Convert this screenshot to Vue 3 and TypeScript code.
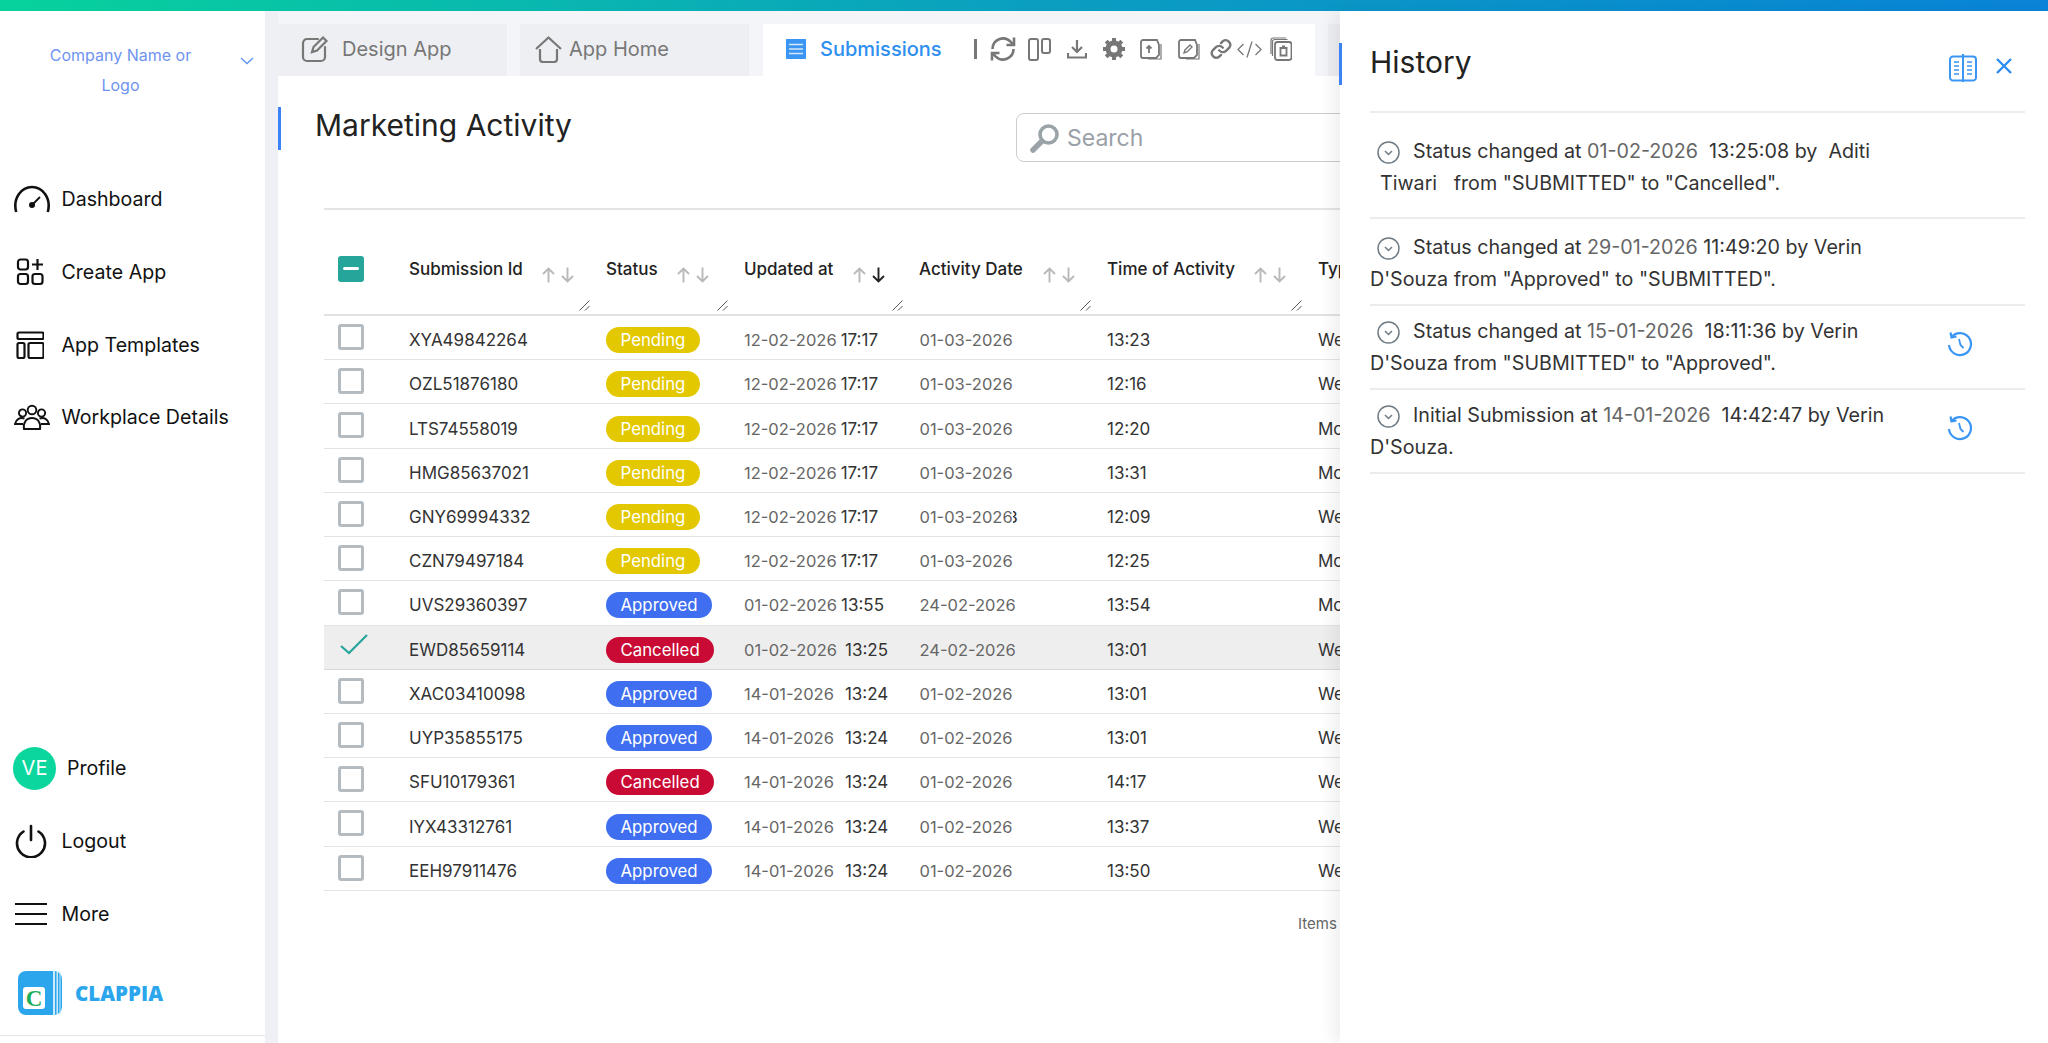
<script setup lang="ts">
interface Row { id: string; status: 'Pending' | 'Approved' | 'Cancelled'; updated: string; time: string; wide: boolean; date: string; at: string; type: string; selected?: boolean; stray?: boolean }
const P = 'Pending' as const, A = 'Approved' as const, C = 'Cancelled' as const
const rows: Row[] = [
  { id: 'XYA49842264', status: P, updated: '12-02-2026', time: '17:17', wide: false, date: '01-03-2026', at: '13:23', type: 'Webinar' },
  { id: 'OZL51876180', status: P, updated: '12-02-2026', time: '17:17', wide: false, date: '01-03-2026', at: '12:16', type: 'Webinar' },
  { id: 'LTS74558019', status: P, updated: '12-02-2026', time: '17:17', wide: false, date: '01-03-2026', at: '12:20', type: 'Monthly' },
  { id: 'HMG85637021', status: P, updated: '12-02-2026', time: '17:17', wide: false, date: '01-03-2026', at: '13:31', type: 'Monthly' },
  { id: 'GNY69994332', status: P, updated: '12-02-2026', time: '17:17', wide: false, date: '01-03-2026', at: '12:09', type: 'Webinar', stray: true },
  { id: 'CZN79497184', status: P, updated: '12-02-2026', time: '17:17', wide: false, date: '01-03-2026', at: '12:25', type: 'Monthly' },
  { id: 'UVS29360397', status: A, updated: '01-02-2026', time: '13:55', wide: false, date: '24-02-2026', at: '13:54', type: 'Monthly' },
  { id: 'EWD85659114', status: C, updated: '01-02-2026', time: '13:25', wide: true, date: '24-02-2026', at: '13:01', type: 'Webinar', selected: true },
  { id: 'XAC03410098', status: A, updated: '14-01-2026', time: '13:24', wide: true, date: '01-02-2026', at: '13:01', type: 'Webinar' },
  { id: 'UYP35855175', status: A, updated: '14-01-2026', time: '13:24', wide: true, date: '01-02-2026', at: '13:01', type: 'Webinar' },
  { id: 'SFU10179361', status: C, updated: '14-01-2026', time: '13:24', wide: true, date: '01-02-2026', at: '14:17', type: 'Webinar' },
  { id: 'IYX43312761', status: A, updated: '14-01-2026', time: '13:24', wide: true, date: '01-02-2026', at: '13:37', type: 'Webinar' },
  { id: 'EEH97911476', status: A, updated: '14-01-2026', time: '13:24', wide: true, date: '01-02-2026', at: '13:50', type: 'Webinar' },
]
const headers = [
  { label: 'Submission Id', gap: 19, active: false },
  { label: 'Status', gap: 19, active: false },
  { label: 'Updated at', gap: 20, active: true },
  { label: 'Activity Date', gap: 20, active: false },
  { label: 'Time of Activity', gap: 19, active: false },
]
</script>

<template>
  <div class="app">
    <div class="topbar"></div>
    <div class="shell">
      <aside class="sidebar">
        <div class="company">
          <div class="company-name">Company Name or<br />Logo</div>
          <svg class="chev" width="14" height="8" viewBox="0 0 14 8" fill="none" stroke="#5b93ec" stroke-width="1.3"><path d="M1 1l6 5.5L13 1" /></svg>
        </div>
        <nav class="nav">
          <a class="nav-item">
            <svg class="gauge" width="38" height="28" viewBox="0 0 38 28" fill="none" stroke="#111" stroke-width="2.6"><path d="M3.2 27C-.5 13 8.5 2 19 2s19.500 11 15.800 25" /><circle cx="19" cy="20" r="3" fill="#111" stroke="none" /><path d="M19 20l8-8" stroke-width="1.800" /></svg>
            <span>Dashboard</span>
          </a>
          <a class="nav-item">
            <svg width="28" height="28" viewBox="0 0 28 28" fill="none" stroke="#111" stroke-width="2.2"><rect x="2" y="1.500" width="10" height="10" rx="2.500" /><rect x="2" y="16" width="10" height="10" rx="2.500" /><rect x="16.500" y="16" width="10" height="10" rx="2.500" /><path d="M21.500 1v11M16 6.500h11" /></svg>
            <span>Create App</span>
          </a>
          <a class="nav-item">
            <svg width="28" height="28" viewBox="0 0 28 28" fill="none" stroke="#111" stroke-width="2.2"><rect x="1.500" y="1.500" width="26" height="6.500" rx="1.500" /><rect x="1.500" y="12" width="7" height="15" rx="1.500" /><rect x="12.500" y="12" width="15" height="15" rx="1.500" /></svg>
            <span>App Templates</span>
          </a>
          <a class="nav-item">
            <svg class="shift" width="36" height="26" viewBox="0 0 36 26" fill="none" stroke="#111" stroke-width="1.900"><circle cx="18" cy="6" r="4.300" /><circle cx="8.500" cy="9" r="3.600" /><circle cx="27.500" cy="9" r="3.600" /><path d="M10 25c-1-6 2-11 8-11s9 5 8 11z" /><path d="M10.500 14.500C6 13 2 15 1 20h8M25.500 14.500c4.500-1.500 8.500.5 9.500 5.500h-8" /></svg>
            <span>Workplace Details</span>
          </a>
        </nav>
        <div class="nav bottom">
          <a class="nav-item profile">
            <span class="avatar">VE</span>
            <span>Profile</span>
          </a>
          <a class="nav-item">
            <svg class="shift" width="34" height="34" viewBox="0 0 34 34" fill="none" stroke="#111" stroke-width="2.600" stroke-linecap="round"><path d="M17 2v14" /><path d="M9.500 7.500a14 14 0 1 0 15 0" /></svg>
            <span>Logout</span>
          </a>
          <a class="nav-item">
            <svg class="shift" width="34" height="24" viewBox="0 0 34 24" stroke="#111" stroke-width="2.200"><path d="M1 2h32M1 12h32M1 22h32" /></svg>
            <span>More</span>
          </a>
        </div>
        <div class="brand">
          <svg width="44" height="44" viewBox="0 0 44 44"><rect width="44" height="44" rx="8" fill="#2ba6ec" /><path d="M35 0h2v44h-2zM38.500 0h1.500v44h-1.500zM41.500 0h1v44h-1z" fill="#cdeafb" /><rect x="5" y="16" width="22" height="22" rx="3" fill="#fff" /><text x="16" y="34.500" text-anchor="middle" font-family="Liberation Serif, serif" font-weight="700" font-size="23" fill="#1fae5b">C</text></svg>
          <span class="brand-name">CLAPPIA</span>
        </div>
      </aside>
      <main class="main">
        <div class="tabs">
          <div class="tab">
            <svg width="28" height="28" viewBox="0 0 28 28" fill="none" stroke="#777" stroke-width="2.200" stroke-linecap="round"><path d="M17 4H6a4 4 0 0 0-4 4v14a4 4 0 0 0 4 4h14a4 4 0 0 0 4-4V12" /><path d="M11 17l1.500-5L22 2.500l3.500 3.500L16 15.500z" /></svg>
            <span>Design App</span>
          </div>
          <div class="tab home">
            <svg width="27" height="27" viewBox="0 0 27 27" fill="none" stroke="#777" stroke-width="2.200" stroke-linejoin="round"><path d="M1 13L13.500 1.500 26 13" /><path d="M5 13v10a3 3 0 0 0 3 3h11a3 3 0 0 0 3-3V13" /></svg>
            <span>App Home</span>
          </div>
          <div class="tab active">
            <svg width="20" height="20" viewBox="0 0 20 20"><rect width="20" height="20" fill="#3b95f3" /><path d="M3 5.500h14M3 10h14M3 14.500h14" stroke="#d4e8fc" stroke-width="1.500" /></svg>
            <span class="tab-label">Submissions</span>
            <span class="sep"></span>
            <svg class="t1" width="26" height="26" viewBox="0 0 26 26" fill="none" stroke="#777" stroke-width="2.600"><path d="M2.500 13a10.500 10.500 0 0 1 18-7.300L23.500 9M23.500 13a10.500 10.500 0 0 1-18 7.300L2.500 17" /><path d="M24 1.500V9h-7.500M2 24.500V17h7.500" /></svg>
            <svg class="t2" width="23" height="23" viewBox="0 0 23 23" fill="none" stroke="#777" stroke-width="2"><rect x="1" y="1" width="9" height="21" rx="2" /><rect x="14" y="1" width="8" height="14" rx="2" /></svg>
            <svg class="t3" width="20" height="20" viewBox="0 0 20 20" fill="none" stroke="#777" stroke-width="2.200"><path d="M10 1v12M5 8l5 5 5-5" /><path d="M1 14v4.500h18V14" /></svg>
            <svg class="t4" width="24" height="26" viewBox="0 0 24 24" fill="none" stroke="#777" stroke-width="5"><circle cx="12" cy="12" r="6" /><path stroke-width="4" d="M12 1v4M12 19v4M1 12h4M19 12h4M4.200 4.200l2.800 2.800M17 17l2.800 2.800M4.200 19.800L7 17M17 7l2.800-2.800" /></svg>
            <svg class="t5" width="22" height="21" viewBox="0 0 22 21" fill="none" stroke="#777" stroke-width="1.800"><path d="M17 1H3a2 2 0 0 0-2 2v14a2 2 0 0 0 2 2h13l3-3V6z" /><path d="M21 5v15H8" stroke-width="1.200" /><path d="M9 14V7M6.500 9.500L9 7l2.500 2.500" /></svg>
            <svg class="t6" width="22" height="21" viewBox="0 0 22 21" fill="none" stroke="#777" stroke-width="1.800"><path d="M17 1H3a2 2 0 0 0-2 2v14a2 2 0 0 0 2 2h13l3-3V6z" /><path d="M21 5v15H8" stroke-width="1.200" /><path d="M6 14l1-3 5-5 2 2-5 5z" stroke-width="1.400" /></svg>
            <svg class="t7" width="22" height="22" viewBox="0 0 24 24" fill="none" stroke="#777" stroke-width="2.600" stroke-linecap="round"><path d="M10 13.500a5 5 0 0 0 7.500.5l3.500-3.500a5 5 0 0 0-7-7l-2 2" /><path d="M14 10.500a5 5 0 0 0-7.500-.5L3 13.500a5 5 0 0 0 7 7l2-2" /></svg>
            <svg class="t8" width="25" height="17" viewBox="0 0 25 17" fill="none" stroke="#777" stroke-width="1.300"><path d="M6.500 3L1 8.500 6.500 14M18.500 3L24 8.500 18.500 14M15 .5L10 16.500" /></svg>
            <svg class="t9" width="22" height="24" viewBox="0 0 22 24" fill="none" stroke="#777"><path d="M1 17V3a2 2 0 0 1 2-2h13" stroke-width="1.200" /><path d="M2.500 19V4.500a2 2 0 0 1 2-2h13" stroke-width="1.200" /><rect x="5" y="5" width="16.500" height="18" rx="2.500" stroke-width="1.800" /><path d="M9.500 11h8M10.500 11.500v7h6v-7M12 9.500h3" stroke-width="1.800" /></svg>
          </div>
          <div class="tab-rest"></div>
        </div>
        <div class="page">
          <div class="page-head">
            <h1 class="title">Marketing Activity</h1>
            <div class="search">
              <svg width="30" height="30" viewBox="0 0 30 30" fill="none" stroke="#9aa3a8"><circle cx="18.500" cy="11.500" r="8.500" stroke-width="3.600" /><path d="M11.500 18.500L3 27" stroke-width="5.500" stroke-linecap="round" /></svg>
              <span>Search</span>
            </div>
          </div>
          <div class="rule"></div>
          <div class="table">
            <div class="thead grid">
              <div class="cell-check"><span class="minus"></span></div>
              <div v-for="h in headers" :key="h.label" class="th">
                <span class="th-label">{{ h.label }}</span>
                <span class="arrows" :style="{ marginLeft: h.gap + 'px' }">
                  <svg width="13" height="16" viewBox="0 0 13 16" fill="none" stroke="#b9b9b9" stroke-width="1.900"><path d="M6.500 15.500V1.500M1 7l5.500-5.500L12 7" /></svg>
                  <svg width="13" height="16" viewBox="0 0 13 16" fill="none" :stroke="h.active ? '#222' : '#b9b9b9'" stroke-width="1.900"><path d="M6.500.5v14M1 9l5.500 5.500L12 9" /></svg>
                </span>
                <svg class="grip" width="11" height="11" viewBox="0 0 11 11" stroke="#555" stroke-width="1"><path d="M.5 10.500L10.500.5M6 10.500L10.500 6" /></svg>
              </div>
              <div class="th"><span class="th-label">Type</span></div>
            </div>
            <div v-for="r in rows" :key="r.id" class="grid tr" :class="{ selected: r.selected }">
              <div class="cell-check">
                <svg v-if="r.selected" class="tick" width="28" height="21" viewBox="0 0 28 21" fill="none" stroke="#26a69a" stroke-width="2.200"><path d="M1 12l8 7L27 1" /></svg>
                <span v-else class="box"></span>
              </div>
              <div class="td id">{{ r.id }}</div>
              <div class="td"><span class="badge" :class="r.status.toLowerCase()">{{ r.status }}</span></div>
              <div class="td"><span class="muted">{{ r.updated }}</span><span class="time" :class="{ wide: r.wide, wider: r.updated.startsWith('14') }">{{ r.time }}</span></div>
              <div class="td date"><span class="muted">{{ r.date }}</span><span v-if="r.stray" class="stray">3</span></div>
              <div class="td id">{{ r.at }}</div>
              <div class="td id">{{ r.type }}</div>
            </div>
          </div>
          <div class="items">Items per page</div>
        </div>
      </main>
    </div>
    <section class="panel">
      <span class="panel-bar"></span>
      <header class="panel-head">
        <h2>History</h2>
        <svg class="book" width="28" height="28" viewBox="0 0 28 28" fill="none" stroke="#3b95f3" stroke-width="2"><path d="M13 2.500H4a3 3 0 0 0-3 3v18a3 3 0 0 0 3 3h9M15 2.500h9a3 3 0 0 1 3 3v18a3 3 0 0 1-3 3h-9M14 0v28" /><path d="M5 8h5M5 12h5M5 16h5M5 20h5M18 8h5M18 12h5M18 16h5M18 20h5" stroke-width="1.400" /></svg>
        <svg class="close" width="16" height="16" viewBox="0 0 16 16" stroke="#2f8ff0" stroke-width="2.400"><path d="M1 1l14 14M15 1L1 15" /></svg>
      </header>
      <article class="entry e1">
        <p>
          <svg class="down" width="23" height="23" viewBox="0 0 23 23" fill="none" stroke="#6f7c85" stroke-width="1.500"><circle cx="11.500" cy="11.500" r="10.500" /><path d="M8 10l3.500 3.500L15 10" /></svg>
          <span class="lead">Status changed at</span> <span class="muted">01-02-2026</span>&nbsp; 13:25:08 by&nbsp; Aditi<br /><span class="indent">Tiwari</span>&nbsp;&nbsp; from "SUBMITTED" to "Cancelled".
        </p>
      </article>
      <article class="entry e2">
        <p>
          <svg class="down" width="23" height="23" viewBox="0 0 23 23" fill="none" stroke="#6f7c85" stroke-width="1.500"><circle cx="11.500" cy="11.500" r="10.500" /><path d="M8 10l3.500 3.500L15 10" /></svg>
          <span class="lead">Status changed at</span> <span class="muted">29-01-2026</span> 11:49:20 by Verin D'Souza from "Approved" to "SUBMITTED".
        </p>
      </article>
      <article class="entry">
        <p>
          <svg class="down" width="23" height="23" viewBox="0 0 23 23" fill="none" stroke="#6f7c85" stroke-width="1.500"><circle cx="11.500" cy="11.500" r="10.500" /><path d="M8 10l3.500 3.500L15 10" /></svg>
          <span class="lead">Status changed at</span> <span class="muted">15-01-2026</span>&nbsp; 18:11:36 by Verin D'Souza from "SUBMITTED" to "Approved".
        </p>
        <svg class="restore" width="25" height="26" viewBox="0 0 25 26" fill="none" stroke="#3b95f3" stroke-width="2.200"><path d="M4.500 6A11 11 0 1 1 2 14" /><path d="M3.500 1.500L4.500 6.500 9.500 5.500" /><path d="M12 8l1.500 6 3 3" stroke-width="1.800" /></svg>
      </article>
      <article class="entry e4">
        <p>
          <svg class="down" width="23" height="23" viewBox="0 0 23 23" fill="none" stroke="#6f7c85" stroke-width="1.500"><circle cx="11.500" cy="11.500" r="10.500" /><path d="M8 10l3.500 3.500L15 10" /></svg>
          <span class="lead">Initial Submission at</span> <span class="muted">14-01-2026</span>&nbsp; 14:42:47 by Verin D'Souza.
        </p>
        <svg class="restore" width="25" height="26" viewBox="0 0 25 26" fill="none" stroke="#3b95f3" stroke-width="2.200"><path d="M4.500 6A11 11 0 1 1 2 14" /><path d="M3.500 1.500L4.500 6.500 9.500 5.500" /><path d="M12 8l1.500 6 3 3" stroke-width="1.800" /></svg>
      </article>
    </section>
  </div>
</template>

<style>
html, body { margin: 0; height: 100%; overflow: hidden; background: #fff; }
</style>

<style scoped>
.app { position: relative; width: 2048px; height: 1043px; overflow: hidden; font-family: Inter, "Liberation Sans", sans-serif; color: #222; display: flex; flex-direction: column; }
.topbar { height: 11px; flex: none; background: linear-gradient(90deg, #07d29c 0%, #0a9fc0 50%, #0a84d8 100%); }
.shell { flex: 1; display: flex; min-height: 0; background: #eff0f5; }
.sidebar { width: 265px; flex: none; background: #fff; display: flex; flex-direction: column; box-sizing: border-box; padding-bottom: 7px; }
.company { position: relative; padding-top: 29px; height: 152px; box-sizing: border-box; flex: none; }
.company-name { width: 241px; text-align: center; font-size: 16px; line-height: 30px; color: #6f93f0; }
.chev { position: absolute; left: 240px; top: 46px; }
.nav { display: flex; flex-direction: column; }
.nav-item { display: flex; align-items: center; height: 72.7px; color: #111; font-size: 19.600px; position: relative; padding-left: 61.500px; box-sizing: border-box; }
.nav-item > svg { position: absolute; left: 16px; top: 50%; transform: translateY(-50%); }
.nav-item > svg.gauge { left: 12.500px; }
.nav-item > svg.shift { left: 14px; }
.bottom { margin-top: auto; }
.profile { padding-left: 67px; }
.avatar { position: absolute; left: 13px; top: 15px; width: 43px; height: 43px; border-radius: 50%; background: #0bd69d; color: #fff; font-size: 20px; display: flex; align-items: center; justify-content: center; }
.brand { display: flex; align-items: center; gap: 13px; padding-left: 18px; height: 86px; flex: none; box-sizing: border-box; border-bottom: 1.500px solid #e6e6e6; }
.brand-name { color: #2ba6ec; font-size: 20.500px; font-weight: 800; font-family: "Open Sans", Inter, sans-serif; }
.main { margin-left: 13px; flex: 1; min-width: 0; display: flex; flex-direction: column; overflow: hidden; background: #fff; }
.tabs { display: flex; height: 65px; box-sizing: border-box; padding-top: 13px; background: #f4f5f9; flex: none; }
.tab { display: flex; align-items: center; width: 229px; background: #eeeff3; color: #777; font-size: 20px; line-height: 24px; padding: 0 0 2px 23px; box-sizing: border-box; gap: 13px; }
.tab.home { width: 229px; margin-left: 13px; padding-left: 15px; gap: 7px; }
.tab.active { width: 552px; margin-left: 14px; background: #fff; padding-left: 23px; gap: 0; color: #2f8ff0; }
.tab-label { margin-left: 14px; font-weight: 500; }
.tab-rest { margin-left: 13px; width: 12px; background: #eeeff3; }
.sep { width: 3px; height: 20px; background: #777; margin-left: 32px; }
.t1 { margin-left: 13px; }
.t2 { margin-left: 12px; }
.t3 { margin-left: 16px; }
.t4 { margin-left: 15px; }
.t5 { margin-left: 14px; }
.t6 { margin-left: 16px; }
.t7 { margin-left: 10px; }
.t8 { margin-left: 5px; }
.t9 { margin-left: 8px; }
.page { flex: 1; position: relative; }
.page-head { display: flex; margin-top: 31px; height: 43px; border-left: 3px solid #3b82f6; padding-left: 34px; }
.title { margin: 0; font-size: 30px; font-weight: 400; line-height: 37px; color: #222; width: 701px; flex: none; }
.search { flex: none; width: 420px; height: 49px; margin-top: 6px; box-sizing: border-box; border: 1.5px solid #ccc; border-radius: 8px; display: flex; align-items: center; padding-left: 13px; gap: 7px; color: #9aa0a6; font-size: 23px; }
.rule { height: 1.500px; margin: 58px 0 0 46px; background: #e4e4e4; }
.table { margin: 21px 0 0 46px; width: 1200px; }
.grid { display: grid; grid-template-columns: 85px 197px 138px 175px 188px 211px 206px; }
.thead { height: 85.5px; box-sizing: border-box; border-bottom: 2px solid #e2e2e2; }
.cell-check { padding-left: 14px; }
.thead .cell-check { padding-top: 25px; }
.minus { display: block; width: 26px; height: 26px; border-radius: 3px; background: #26a69a; position: relative; }
.minus::after { content: ""; position: absolute; left: 5px; right: 5px; top: 11px; height: 3.500px; background: #fff; border-radius: 2px; }
.th { position: relative; display: flex; align-items: flex-start; padding-top: 28px; font-size: 17px; font-weight: 500; color: #222; }
.th-label { line-height: 20px; white-space: nowrap; }
.arrows { display: flex; gap: 6px; margin-top: 8px; }
.grip { position: absolute; right: 16px; bottom: 3px; }
.tr { height: 44.230px; box-sizing: border-box; border-bottom: 1.500px solid #e4e4e4; }
.tr.selected { background: #eee; border-bottom-color: #d8d8d8; }
.tr .cell-check { padding-top: 8px; position: relative; }
.box { display: block; width: 26px; height: 26px; box-sizing: border-box; border: 3px solid #b4bcc2; border-radius: 3px; }
.tick { position: absolute; left: 16px; top: 8px; }
.td { display: flex; align-items: center; padding-top: 5px; font-size: 17px; color: #333; white-space: nowrap; }
.td.date { padding-left: .5px; }
.muted { color: #666; font-size: 16.500px; }
.stray { display: flex; justify-content: flex-end; width: 5px; overflow: hidden; color: #222; font-size: 16.500px; }
.time { color: #333; margin-left: 4px; }
.time.wide { margin-left: 8px; }
.time.wider { margin-left: 11px; }
.badge { height: 26px; border-radius: 13px; padding: 0 14.500px; color: #fff; font-size: 16.800px; line-height: 26px; }
.pending { background: #e3c800; }
.approved { background: #3f6ff0; }
.cancelled { background: #c90a35; }
.items { position: absolute; left: 1020px; top: 838px; font-size: 15px; color: #666; white-space: nowrap; }
.panel { position: absolute; left: 1340px; top: 11px; right: 0; bottom: 0; background: #fff; box-shadow: -8px 0 14px rgba(0, 0, 0, .06); padding: 0 23px 0 30px; box-sizing: border-box; }
.panel-bar { position: absolute; left: -1px; top: 32px; width: 3px; height: 42px; background: #3b82f6; }
.panel-head { display: flex; align-items: flex-start; height: 102px; box-sizing: border-box; padding-top: 33px; border-bottom: 2px solid #ececec; }
.panel-head h2 { margin: 0; font-size: 30px; line-height: 36px; font-weight: 400; color: #222; flex: 1; }
.book { margin: 10px 19px 0 0; }
.close { margin: 14px 13px 0 0; }
.entry { position: relative; border-bottom: 2px solid #ececec; padding: 10px 130px 9px 0; font-size: 19.700px; line-height: 31.500px; color: #333; }
.entry.e1 { padding: 23px 130px 18px 0; }
.entry.e2 { padding: 13px 130px 9px 0; }
.entry.e4 { padding: 10px 130px 9px 0; }
.entry p { margin: 0; }
.entry .muted { font-size: 19.700px; }
.down { vertical-align: -6px; margin-left: 7px; margin-right: 13px; }
.indent { margin-left: 10px; }
.restore { position: absolute; left: 577px; top: 25px; }
</style>
